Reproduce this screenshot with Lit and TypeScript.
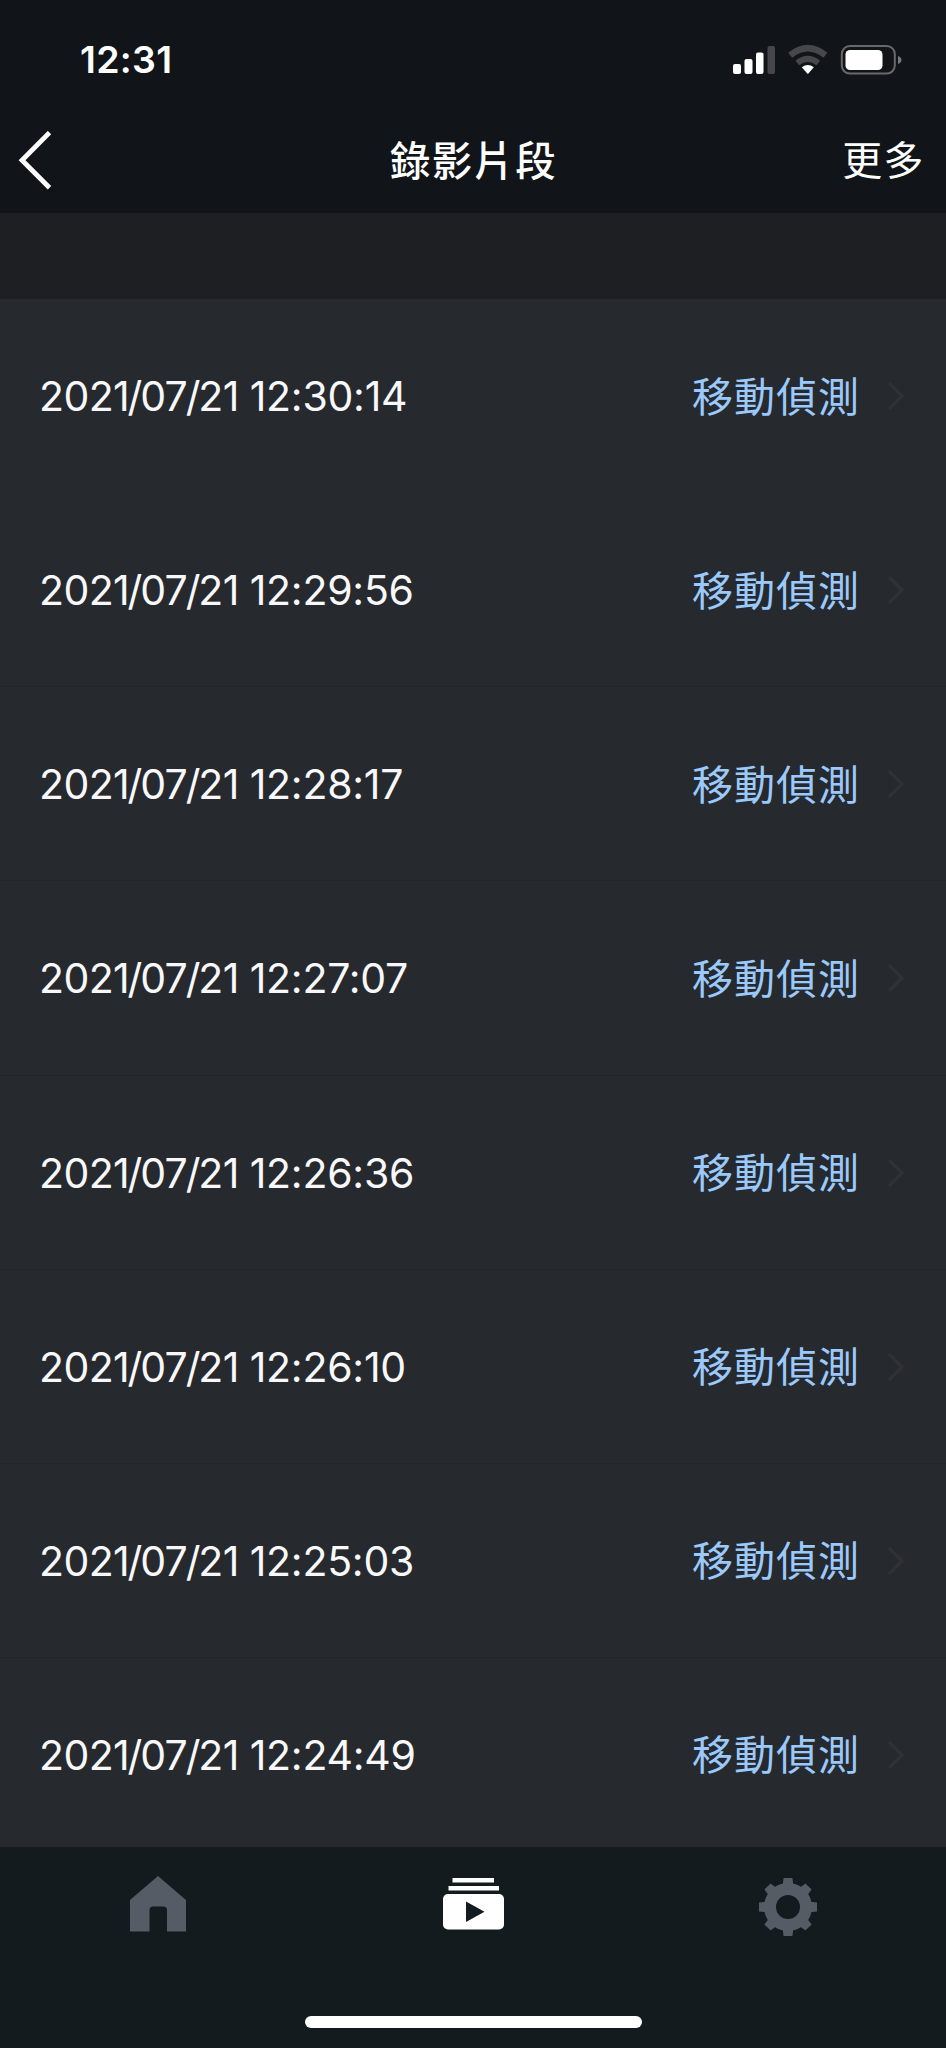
import { LitElement, html, css, svg } from "lit";
import { customElement, property } from "lit/decorators.js";

@customElement("status-bar")
class StatusBar extends LitElement {
  static styles = css`
    :host { display: flex; justify-content: space-between; height: 120px; padding: 0 43px 0 80px; box-sizing: border-box; }
    .time { font-size: 37.5px; font-weight: 600; line-height: 46px; padding-top: 37px; letter-spacing: 0.3px; }
    .icons { display: block; margin-top: 40px; }
  `;
  render() {
    return html`
      <div class="time">12:31</div>
      <svg class="icons" width="172" height="40" viewBox="731 40 172 40">
        <g fill="#fff">
          <rect x="733" y="64" width="8" height="10" rx="2" />
          <rect x="744.5" y="59" width="8" height="15" rx="2" />
          <rect x="756" y="52.5" width="7.5" height="21.5" rx="2" />
          <rect x="767.5" y="46" width="7.5" height="28" rx="2" fill="#46474b" />
          <path d="M801.8 67.2Q807.8 62.8 813.8 67.2L808.6 73.2Q807.8 74.2 807 73.2Z" />
        </g>
        <g fill="none" stroke="#46474b">
          <path d="M790.2 55.3Q807.8 41 825.4 55.3" stroke-width="6.4" />
          <path d="M797.3 63Q807.8 54.8 818.3 63" stroke-width="6" />
        </g>
        <rect x="841.8" y="46" width="53" height="27.6" rx="8" fill="none" stroke="#68696d" stroke-width="2" />
        <rect x="845.5" y="50" width="37" height="20" rx="4.5" fill="#fff" />
        <path d="M898 56Q901.5 57.5 901.5 60Q901.5 62.5 898 64Z" fill="#77787b" />
      </svg>
    `;
  }
}

@customElement("nav-header")
class NavHeader extends LitElement {
  static styles = css`
    :host { display: grid; grid-template-columns: 1fr auto 1fr; align-items: center; height: 93px; padding: 0 21px 12px 18px; box-sizing: border-box; }
    .back { display: block; }
    .title { font-size: 40.5px; font-weight: 500; letter-spacing: 1.2px; line-height: 60px; margin-left: 4px; padding-top: 2px; }
    .more { font-size: 40px; letter-spacing: 1.4px; line-height: 60px; justify-self: end; padding-top: 1px; }
  `;
  render() {
    return html`
      <svg class="back" width="36" height="60" viewBox="18 131 36 60">
        <path d="M49.5 132.6L22 160.2L49.5 187.8" fill="none" stroke="#fff" stroke-width="4.8" />
      </svg>
      <div class="title">錄影片段</div>
      <div class="more">更多</div>
    `;
  }
}

@customElement("clip-row")
class ClipRow extends LitElement {
  @property() date = "";
  @property() time = "";
  @property() event = "";
  static styles = css`
    :host { display: flex; align-items: center; height: 194.14px; padding: 1px 39px 0 39px; box-sizing: border-box; border-bottom: 1px solid #232629; }
    :host(:first-child) { border-bottom-color: transparent; }
    .stamp { flex: 1; font-size: 41px; line-height: 60px; letter-spacing: -0.6px; white-space: nowrap; color: #f8f8fa; }
    .slash { margin: 0 -1.6px; }
    .clock { letter-spacing: -0.25px; }
    .event { font-size: 41px; line-height: 60px; letter-spacing: 1px; color: #9bc9fb; padding-top: 1px; }
    .arrow { display: block; margin-left: 26px; margin-right: 1px; }
  `;
  render() {
    const [y, m, d] = this.date.split("/");
    return html`
      <div class="stamp">${y}<span class="slash">/</span>${m}<span class="slash">/</span>${d} <span class="clock">${this.time}</span></div>
      <div class="event">${this.event}</div>
      <svg class="arrow" width="20" height="32" viewBox="0 0 20 32">
        <path d="M3 3L16 16L3 29" fill="none" stroke="#2f3135" stroke-width="3.4" />
      </svg>
    `;
  }
}

@customElement("tab-bar")
class TabBar extends LitElement {
  static styles = css`
    :host { display: flex; flex-direction: column; align-items: center; height: 201px; background: #141b1e; }
    .tabs { display: grid; grid-template-columns: repeat(3, 1fr); width: 100%; justify-items: center; padding-top: 26px; }
    .tab { display: block; }
    .home-indicator { width: 337px; height: 12px; border-radius: 6px; background: #fff; margin-top: 79px; }
  `;
  render() {
    const teeth = [0, 45, 90, 135, 180, 225, 270, 315].map(
      (a) => svg`<path d="M-4.4 -29H4.4L5.6 -20H-5.6Z" transform="rotate(${a})" />`
    );
    return html`
      <div class="tabs">
        <svg class="tab" width="64" height="64" viewBox="0 0 64 64">
          <path fill="#555c65" d="M32 3L60 27V58.5H41V37Q41 33.5 37.5 33.5H27Q23.5 33.5 23.5 37V58.5H4V27Z" />
        </svg>
        <svg class="tab" width="64" height="64" viewBox="0 0 64 64">
          <path fill="#fff" d="M11.5 5H53V9.5H11.5ZM7.5 13H58V17.5H7.5Z" />
          <rect x="2" y="21" width="61" height="35.5" rx="5" fill="#fff" />
          <path d="M25 28.5V49L43.5 38.7Z" fill="#141b1e" />
        </svg>
        <svg class="tab" width="64" height="64" viewBox="-32 -34 64 64">
          <g fill="#555c65">
            <path fill-rule="evenodd" d="M0 -24A24 24 0 1 1 0 24A24 24 0 1 1 0 -24ZM0 -12A12 12 0 1 0 0 12A12 12 0 1 0 0 -12Z" />
            ${teeth}
          </g>
        </svg>
      </div>
      <div class="home-indicator"></div>
    `;
  }
}

@customElement("app-root")
class AppRoot extends LitElement {
  static styles = css`
    :host { display: flex; flex-direction: column; height: 2048px; overflow: hidden; background: #111418; color: #fff; font-family: Inter, "Noto Sans CJK TC", sans-serif; }
    .spacer { height: 86px; background: #1e1f23; }
    .list { flex: 1; min-height: 0; overflow: hidden; background: #262a2e; }
  `;
  private times = ["12:30:14", "12:29:56", "12:28:17", "12:27:07", "12:26:36", "12:26:10", "12:25:03", "12:24:49"];
  render() {
    return html`
      <status-bar></status-bar>
      <nav-header></nav-header>
      <div class="spacer"></div>
      <div class="list">
        ${this.times.map((t) => html`<clip-row .date=${"2021/07/21"} .time=${t} .event=${"移動偵測"}></clip-row>`)}
      </div>
      <tab-bar></tab-bar>
    `;
  }
}
